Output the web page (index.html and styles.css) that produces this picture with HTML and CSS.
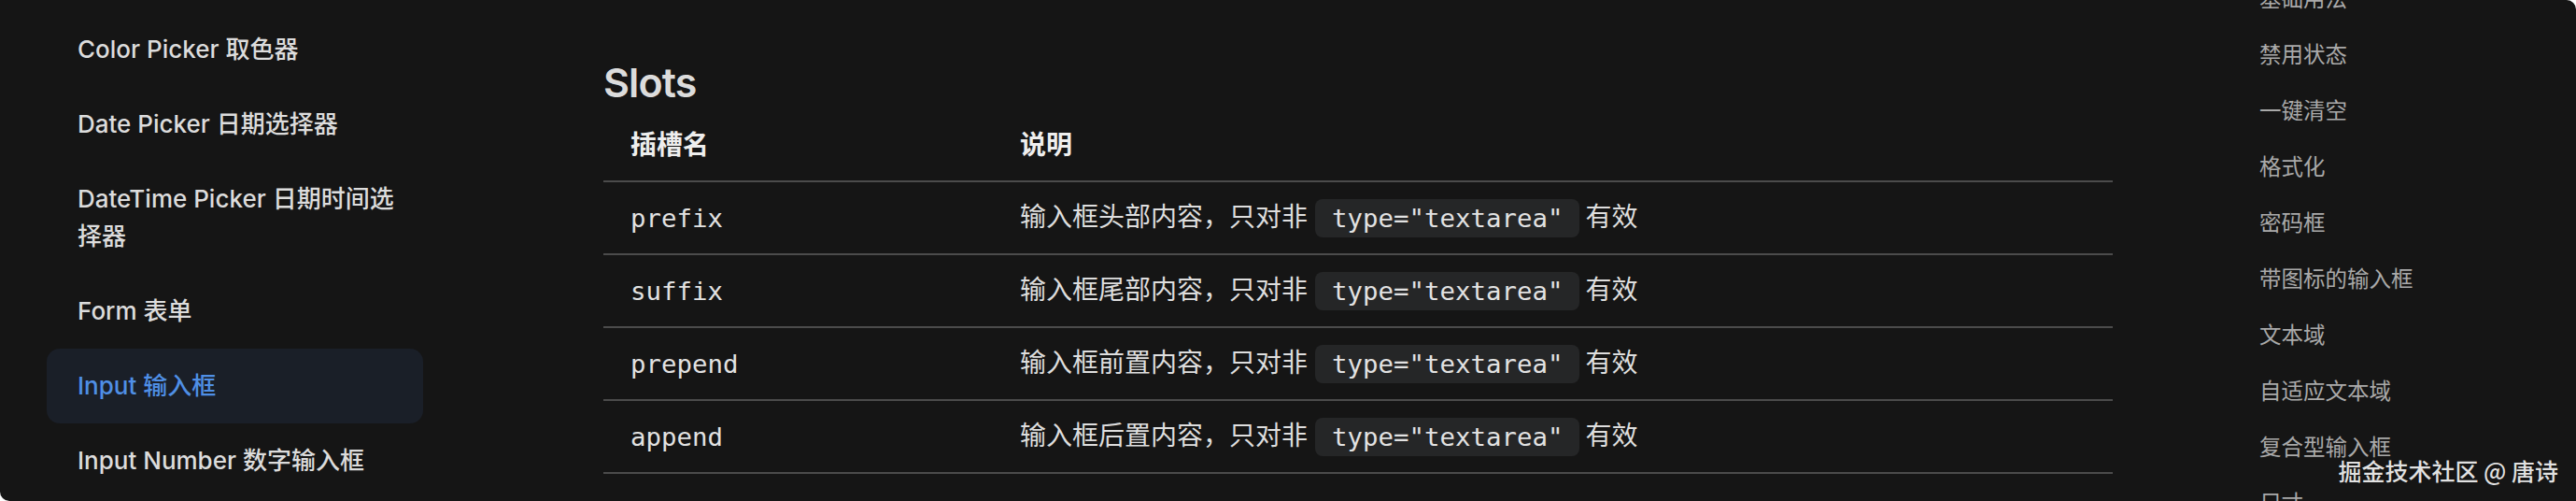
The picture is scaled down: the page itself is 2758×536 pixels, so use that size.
FILE: index.html
```html
<!DOCTYPE html>
<html>
<head>
    <link rel="stylesheet" href="styles.css">
</head>

<body>
<div class="app">
    <nav class="sidebar">
        <a href="#" class="side-item">Color Picker 取色器</a>
        <a href="#" class="side-item">Date Picker 日期选择器</a>
        <a href="#" class="side-item">DateTime Picker 日期时间选择器</a>
        <a href="#" class="side-item">Form 表单</a>
        <a href="#" class="side-item active">Input 输入框</a>
        <a href="#" class="side-item">Input Number 数字输入框</a>
    </nav>

    <main class="content">
        <h2 class="title">Slots</h2>
        <table class="slots">
            <thead>
                <tr>
                    <th>插槽名</th>
                    <th>说明</th>
                </tr>
            </thead>
            <tbody>
                <tr>
                    <td><span class="mono">prefix</span></td>
                    <td>输入框头部内容，只对非<code>type="textarea"</code>有效</td>
                </tr>
                <tr>
                    <td><span class="mono">suffix</span></td>
                    <td>输入框尾部内容，只对非<code>type="textarea"</code>有效</td>
                </tr>
                <tr>
                    <td><span class="mono">prepend</span></td>
                    <td>输入框前置内容，只对非<code>type="textarea"</code>有效</td>
                </tr>
                <tr>
                    <td><span class="mono">append</span></td>
                    <td>输入框后置内容，只对非<code>type="textarea"</code>有效</td>
                </tr>
            </tbody>
        </table>
    </main>

    <aside class="outline">
        <ul>
            <li>基础用法</li>
            <li>禁用状态</li>
            <li>一键清空</li>
            <li>格式化</li>
            <li>密码框</li>
            <li>带图标的输入框</li>
            <li>文本域</li>
            <li>自适应文本域</li>
            <li>复合型输入框</li>
            <li>尺寸</li>
        </ul>
    </aside>

    <div class="watermark">掘金技术社区 @ 唐诗</div>
</div>
</body>
</html>
```

FILE: styles.css
```css
body, html {
margin: 0;
padding: 0;
background-color: #ffffff;
}

.app {
position: relative;
display: flex;
width: 2758px;
height: 536px;
overflow: hidden;
background-color: #151515;
border-radius: 0 10px 0 10px;
font-family: Inter, "Noto Sans CJK SC", sans-serif;
color: #dcdcdc;
}

/* left nav */
.sidebar {
width: 403px;
flex-shrink: 0;
padding: 13px 67px 0 50px;
display: flex;
flex-direction: column;
}

.side-item {
display: block;
padding: 20px 24px 20px 33px;
font-size: 26px;
line-height: 40px;
font-weight: 500;
color: #dcdcdc;
text-decoration: none;
border-radius: 14px;
}

.side-item.active {
color: #4f8fe6;
background-color: #1a1f28;
}

/* main column */
.content {
width: 1616px;
flex-shrink: 0;
padding: 60px 0 0 126px;
}

.title {
margin: 0;
font-size: 43px;
line-height: 56px;
font-weight: 600;
letter-spacing: -0.02em;
color: #dcdcdc;
}

.slots {
width: 1616px;
border-collapse: collapse;
table-layout: fixed;
font-size: 28px;
}

.slots th, .slots td {
box-sizing: border-box;
height: 78px;
padding: 0 29px;
text-align: left;
vertical-align: middle;
border-bottom: 2px solid #4b4b4b;
line-height: 40px;
}

.slots th:first-child {
width: 417px;
}

.slots th {
font-weight: 600;
color: #eeeeee;
}

.slots td {
color: #dedede;
}

.mono {
font-family: "DejaVu Sans Mono", monospace;
font-size: 27.4px;
color: #e2e2e2;
}

.slots code {
display: inline-block;
vertical-align: middle;
margin: 0 6px 0 8px;
padding: 0 18px;
height: 41px;
line-height: 41px;
font-family: "DejaVu Sans Mono", monospace;
font-size: 27.4px;
color: #e2e2e2;
background-color: #252627;
border-radius: 8px;
}

/* right outline */
.outline {
flex: 1;
padding-left: 157px;
}

.outline ul {
list-style: none;
margin: -33px 0 0 0;
padding: 0;
}

.outline li {
padding: 12px 0;
line-height: 36px;
font-size: 23.5px;
font-family: "Noto Sans CJK SC", sans-serif;
color: #a9a9a9;
}

.watermark {
position: absolute;
right: 19px;
bottom: 18px;
font-family: "Noto Sans CJK SC", sans-serif;
font-size: 25px;
line-height: 30px;
font-weight: 500;
color: rgba(255, 255, 255, 0.88);
}
```
